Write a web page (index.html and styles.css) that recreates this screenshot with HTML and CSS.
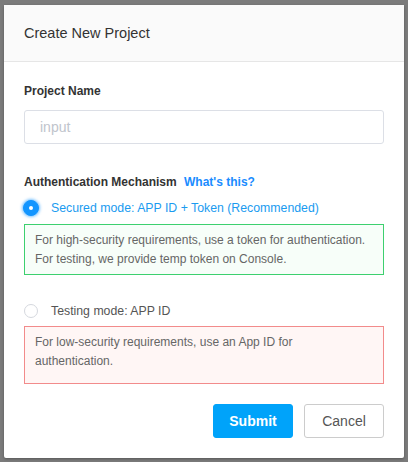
FILE: index.html
```html
<!DOCTYPE html>
<html>
<head>
<meta charset="utf-8">
<link rel="stylesheet" href="styles.css">
</head>
<body>
<div class="backdrop">
  <div class="modal">
    <div class="modal-header">Create New Project</div>
    <div class="modal-body">
      <div class="label">Project Name</div>
      <div class="input">input</div>
      <div class="label auth">Authentication Mechanism <span class="link">What's this?</span></div>
      <div class="radio-row active">
        <span class="radio on"><span class="dot"></span></span>
        <span class="radio-text">Secured mode: APP ID + Token (Recommended)</span>
      </div>
      <div class="note green">For high-security requirements, use a token for authentication. For testing, we provide temp token on Console.</div>
      <div class="radio-row second">
        <span class="radio"></span>
        <span class="radio-text">Testing mode: APP ID</span>
      </div>
      <div class="note red">For low-security requirements, use an App ID for authentication.</div>
      <div class="footer">
        <button class="btn primary">Submit</button>
        <button class="btn">Cancel</button>
      </div>
    </div>
  </div>
</div>
</body>
</html>
```
FILE: styles.css
```css
* { box-sizing: border-box; }
html, body { margin: 0; padding: 0; }
body {
  width: 408px;
  height: 462px;
  background: #7b7b7b;
  font-family: "Liberation Sans", Arial, sans-serif;
  overflow: hidden;
}
.backdrop {
  padding: 5px 4px 0 4px;
}
.modal {
  width: 400px;
  height: 453px;
  background: #fff;
  border-radius: 2px;
  box-shadow: 0 1px 3px rgba(0,0,0,0.3);
}
.modal-header {
  height: 57px;
  background: #fafafa;
  border-bottom: 1px solid #e6e6e6;
  padding: 20px 20px 0 20px;
  font-size: 14.5px;
  color: #333;
  line-height: 17px;
}
.modal-body {
  padding: 21px 20px 0 20px;
}
.label {
  font-size: 12px;
  font-weight: bold;
  color: #333;
  line-height: 16px;
}
.input {
  margin-top: 11px;
  height: 34px;
  border: 1px solid #dcdfe6;
  border-radius: 3px;
  padding: 8px 15px;
  font-size: 14px;
  color: #c0c4cc;
  line-height: 16px;
}
.label.auth {
  margin-top: 30px;
}
.link {
  color: #1a8cff;
  margin-left: 4px;
}
.radio-row {
  display: flex;
  align-items: center;
  margin-top: 9px;
  height: 18px;
  font-size: 12.3px;
  color: #555;
}
.radio-row.active { color: #1a9bf0; }
.radio-row.second { margin-top: 27px; }
.radio {
  width: 14px;
  height: 14px;
  border-radius: 50%;
  border: 1px solid #d5d8de;
  margin-right: 13px;
  display: flex;
  align-items: center;
  justify-content: center;
  flex: none;
}
.radio.on {
  width: 16px;
  height: 16px;
  margin-left: -1px;
  margin-right: 12px;
  background: #1295ff;
  border-color: #1295ff;
  box-shadow: 0 0 3px 1px rgba(18,149,255,0.6);
}
.dot {
  width: 4px;
  height: 4px;
  background: #fff;
  border-radius: 50%;
}
.radio-text { line-height: 16px; }
.note {
  margin-top: 7px;
  border: 1px solid;
  font-size: 12px;
  line-height: 19px;
  color: #666;
  padding: 6px 10px;
}
.note.green {
  border-color: #3dd06f;
  background: #f7fef9;
  height: 51px;
}
.note.red {
  margin-top: 6px;
  border-color: #f28b8b;
  background: #fff6f5;
  height: 58px;
}
.footer {
  display: flex;
  justify-content: flex-end;
  gap: 11px;
  margin-top: 20px;
}
.btn {
  width: 80px;
  height: 34px;
  border-radius: 3px;
  border: 1px solid #ccc;
  background: #fff;
  color: #555;
  font-family: "Liberation Sans", Arial, sans-serif;
  font-size: 14px;
  padding: 0;
}
.btn.primary {
  background: #00a3fa;
  border-color: #00a3fa;
  color: #fff;
  font-weight: bold;
}
```
